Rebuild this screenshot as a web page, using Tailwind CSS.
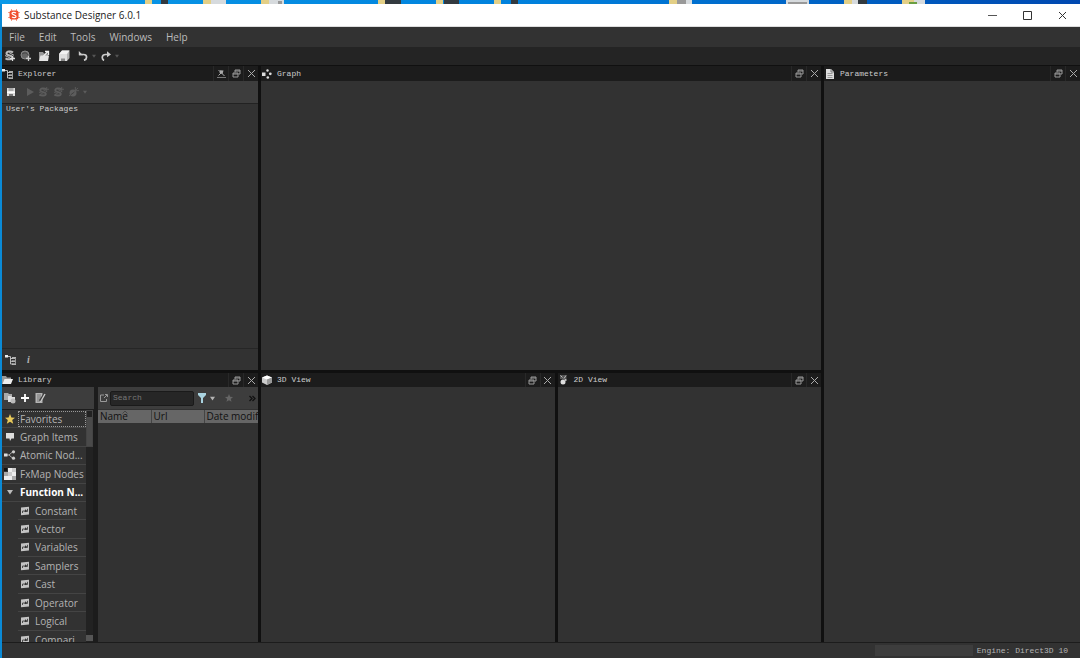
<!DOCTYPE html>
<html lang="en">
<head>
    <meta charset="UTF-8">
    <meta name="viewport" content="width=device-width, initial-scale=1.0">
    <title>Substance Designer 6.0.1</title>
    <script src="https://cdn.jsdelivr.net/npm/@tailwindcss/browser@4"></script>
</head>
<body class="h-screen flex flex-col overflow-hidden bg-[#0a8ad6] font-['Open_Sans',sans-serif] text-[10px] leading-4 text-[#b4b4b4]">

    <!-- shared icons -->
    <svg class="hidden">
        <symbol id="i-float" viewBox="0 0 9 9"><path d="M3 1h5v4H6.500M3 1v2.500M3 2h5" fill="none" stroke="#999"/><path d="M1 4h5v4H1zM1 5h5" fill="none" stroke="#999"/></symbol>
        <symbol id="i-close" viewBox="0 0 9 9"><path d="M1 1l7 7M8 1L1 8" fill="none" stroke="currentColor"/></symbol>
        <symbol id="i-tree" viewBox="0 0 12 10"><path d="M0 0h3v2.500H0z" fill="#eee"/><path d="M3 1.500h2.500v7.500h2M5.500 3.500h2M5.500 6.300h2" fill="none" stroke="#bbb"/><path d="M7 3h4M7 6.200h4M7 9.200h4" fill="none" stroke="#ddd" stroke-width="1.300"/><path d="M10.500 3v6" stroke="#999"/></symbol>
        <symbol id="i-s" viewBox="0 0 12 12"><path d="M9 2.500C7 .8 2.500 1.200 2.500 3.500 2.500 6 8.500 5 8.500 7.500 8.500 9.800 4 9.800 1.500 8.300" fill="none" stroke="currentColor" stroke-width="2"/><path d="M1 5.500l5 2.500M5 2.500l5 2.800" stroke="currentColor"/></symbol>
        <symbol id="i-func" viewBox="0 0 10 10"><path d="M1 1.500L9 .8v7.700l-8 .8z" fill="#c4c4c4"/><path d="M2.500 7V5h3M7.500 2.800v2.700H4.500" fill="none" stroke="#444" stroke-width=".9"/><path d="M5 3.200L7.200 4.800 5 6.300z" fill="#333"/></symbol>
        <symbol id="i-down" viewBox="0 0 6 6"><path d="M0 1h6L3 5.500z" fill="currentColor"/></symbol>
        <symbol id="i-star" viewBox="0 0 10 10"><path d="M5 0l1.400 3.500 3.600.2-2.800 2.400 1 3.700L5 7.800 1.800 9.800l1-3.700L0 3.700l3.600-.2z" fill="currentColor"/></symbol>
    </svg>

    <!-- desktop behind the window -->
    <svg class="w-full h-1 shrink-0" viewBox="0 0 1080 4" preserveAspectRatio="none">
        <defs><linearGradient id="desk"><stop offset="0" stop-color="#0a9ae8"/><stop offset=".5" stop-color="#0080dc"/><stop offset="1" stop-color="#0048b0"/></linearGradient></defs>
        <path fill="url(#desk)" d="M0 0h1080v4H0z"/>
        <path fill="#e3cf86" d="M145 0h7v4h-7zM203 0h8v4h-8zM261 0h8v4h-8zM378 0h7v4h-7zM436 0h7v4h-7zM494 0h7v4h-7zM669 0h8v4h-8zM844 0h8v4h-8zM902 0h12v4h-12z"/>
        <path fill="#d6dadd" d="M211 0h15v4h-15zM269 0h15v4h-15zM686 0h6v4h-6zM786 0h23v4h-23zM852 0h6v4h-6zM914 0h11v4h-11z"/>
        <path fill="#333a40" d="M161 0h7v4h-7zM385 0h16v4h-16zM444 0h15v4h-15zM511 0h7v4h-7zM858 0h9v4h-9z"/>
        <path fill="#999" d="M278 1h4v3h-4zM677 0h9v4h-9zM788 2h19v2h-19z"/>
        <path fill="#6a9f42" d="M909 2h8v2h-8z"/>
    </svg>

    <div class="flex-1 min-h-0 ml-0.5 flex flex-col bg-[#323232]">
        <header class="h-[23px] shrink-0 flex items-center bg-white text-[#222] pl-1.5 border-b border-[#ddd]">
            <svg class="w-3 h-3 mr-1" viewBox="0 0 12 12"><path d="M3.500 0v12M8.500 0v12M0 3.500h12M0 8.500h12" stroke="#f3a08a"/><rect x="1.500" y="1.500" width="9" height="9" rx="2" fill="#f0502f"/><path d="M8 4C6.500 3 4 3.200 4 4.600c0 1.500 4 1.200 4 2.800S5.500 9 4 8" fill="none" stroke="#fff" stroke-width="1.200"/></svg>
            <h1>Substance Designer 6.0.1</h1>
            <div class="ml-auto flex">
                <button class="w-[35px] h-5 flex items-center justify-center" aria-label="Minimize"><svg class="w-[9px] h-[9px]" viewBox="0 0 9 9"><path d="M0 4.500h9" stroke="#555"/></svg></button>
                <button class="w-[35px] h-5 flex items-center justify-center" aria-label="Maximize"><svg class="w-[9px] h-[9px]" viewBox="0 0 9 9"><path d="M.5 .5h8v8h-8z" fill="none" stroke="#333"/></svg></button>
                <button class="w-[35px] h-5 flex items-center justify-center" aria-label="Close"><svg class="w-[9px] h-[9px] text-[#333]"><use href="#i-close"/></svg></button>
            </div>
        </header>

        <nav class="h-5 shrink-0 flex items-center gap-3.5 pl-[7px] text-[#bcbcbc]">
            <button>File</button>
            <button>Edit</button>
            <button>Tools</button>
            <button>Windows</button>
            <button>Help</button>
        </nav>

        <!-- main toolbar -->
        <div class="h-[18px] shrink-0 flex items-center pl-0.5 bg-[#242424] text-[#bbb]">
            <button class="w-4" aria-label="New substance"><svg class="w-3 h-3" viewBox="0 0 12 12"><use href="#i-s"/><path d="M8.500 6v5M6 8.500h5" stroke="#ddd" stroke-width="1.300"/></svg></button>
            <button class="w-[18px]" aria-label="New package"><svg class="w-3 h-3" viewBox="0 0 12 12"><circle cx="5" cy="5" r="4" fill="#666" stroke="#8a8a8a"/><path d="M2 4c3-2 5-1 6 1" stroke="#444" fill="none"/><path d="M8.500 6v5M6 8.500h5" stroke="#ccc" stroke-width="1.300"/></svg></button>
            <button class="w-5" aria-label="Open"><svg class="w-3 h-3" viewBox="0 0 12 12"><path d="M1 2h4l1 1.500h4V11H1z" fill="#999"/><path d="M2.500 5.500H11L10 11H1z" fill="#e4e4e4"/><path d="M5.500 6l4-4M7 1.500h3.500V5" fill="none" stroke="#eee" stroke-width="1.300"/></svg></button>
            <button class="w-5" aria-label="Save all"><svg class="w-3 h-3" viewBox="0 0 12 12"><path d="M4 .5h7.500V8L9 11H1V4z" fill="#b4b4b4"/><path d="M1 4h8v7H1z" fill="#dedede"/><path d="M1 4l3-3.500h7.500L9 4z" fill="#f2f2f2"/><path d="M3 8.500h4V11H3z" fill="#888"/></svg></button>
            <button class="w-3.5" aria-label="Undo"><svg class="w-2.5 h-2.5" viewBox="0 0 10 10"><path d="M1 3.500h4.500C9.500 3.500 9.500 8 6 9.300" fill="none" stroke="#ccc" stroke-width="1.700"/><path d="M.8 0v4.300H5z" fill="#ccc"/></svg></button>
            <button class="w-[9px]" aria-label="Undo history"><svg class="w-1 h-1 text-[#555]"><use href="#i-down"/></svg></button>
            <button class="w-3.5" aria-label="Redo"><svg class="w-2.5 h-2.5" viewBox="0 0 10 10"><path d="M8 3.500H4.500C.5 3.500.5 8 3 9.500" fill="none" stroke="#ccc" stroke-width="1.700"/><path d="M10 3.500L6 .3v6z" fill="#ccc"/></svg></button>
            <button aria-label="Redo history"><svg class="w-1 h-1 text-[#555]"><use href="#i-down"/></svg></button>
        </div>

        <!-- docks -->
        <main class="flex-1 min-h-0 flex gap-[3px] pt-px bg-[#101010]">
            <div class="w-64 shrink-0 flex flex-col gap-[3px]">
                <section class="flex-[304] min-h-0 flex flex-col bg-[#323232]">
                    <div class="h-[15px] shrink-0 flex items-center bg-[#1c1c1c] font-['Liberation_Mono',monospace] text-[8px] text-[#ccc]">
                        <svg class="w-3 h-2.5 mr-1"><use href="#i-tree"/></svg>
                        <h2 class="flex-1">Explorer</h2>
                        <button class="w-[15px] h-full flex items-center justify-center border-l border-[#282828]" aria-label="Pin"><svg class="w-[9px] h-[9px]" viewBox="0 0 9 9"><path d="M0 8.500h9" stroke="#777"/><path d="M1.500 1l6 6" stroke="#aaa"/><path d="M3 1.200l3.500.3L5.500 5 2.500 4z" fill="#aaa"/><path d="M1.500 6.500L4 4" stroke="#aaa"/></svg></button>
                        <button class="w-[15px] h-full flex items-center justify-center border-l border-[#282828]" aria-label="Float"><svg class="w-[9px] h-[9px]"><use href="#i-float"/></svg></button>
                        <button class="w-[15px] h-full flex items-center justify-center border-l border-[#282828] text-[#aaa]" aria-label="Close"><svg class="w-[9px] h-[9px]"><use href="#i-close"/></svg></button>
                    </div>
                    <div class="h-[23px] shrink-0 flex items-center gap-1 pl-1 bg-[#3d3d3d] border-b border-[#222] text-[#5c5c5c]">
                        <button class="mr-1.5" aria-label="Save"><svg class="w-2.5 h-2.5" viewBox="0 0 10 10"><path d="M1 1h8v8H1z" fill="#ddd"/><path d="M2.500 1h5v3h-5z" fill="#aaa"/><path d="M1 4.500h8v1.500H1z" fill="#fff"/><path d="M3 7h4v2H3z" fill="#777"/></svg></button>
                        <button aria-label="Play"><svg class="w-2 h-2" viewBox="0 0 8 8"><path d="M1 0l7 4-7 4z" fill="currentColor"/></svg></button>
                        <button aria-label="Publish"><svg class="w-[11px] h-[11px]" viewBox="0 0 12 12"><use href="#i-s"/><path d="M9.500 0v5M7 2.500h5" stroke="currentColor"/></svg></button>
                        <button aria-label="Export"><svg class="w-[11px] h-[11px]" viewBox="0 0 12 12"><use href="#i-s"/><path d="M9.500 0v5M7 2.500h5" stroke="currentColor"/></svg></button>
                        <button aria-label="Settings"><svg class="w-[11px] h-[11px]" viewBox="0 0 12 12"><circle cx="5.500" cy="6.500" r="3.800" fill="currentColor"/><path d="M1 10L11 1M8 0v4h4" fill="none" stroke="currentColor"/><path d="M3 8.500l4-3" stroke="#3d3d3d"/></svg></button>
                        <button aria-label="More"><svg class="w-1 h-1"><use href="#i-down"/></svg></button>
                    </div>
                    <p class="flex-1 pl-1 leading-[10px] font-['Liberation_Mono',monospace] text-[8px] text-[#ccc]">User's Packages</p>
                    <div class="h-[22px] shrink-0 flex items-center gap-2.5 pl-[3px] border-t border-[#262626]">
                        <button aria-label="Tree"><svg class="w-3 h-2.5"><use href="#i-tree"/></svg></button>
                        <button class="font-['Liberation_Serif',serif] italic font-bold">i</button>
                    </div>
                </section>

                <section class="flex-[269] min-h-0 flex flex-col bg-[#323232]">
                    <div class="h-3.5 shrink-0 flex items-center bg-[#1c1c1c] font-['Liberation_Mono',monospace] text-[8px] text-[#ccc]">
                        <svg class="w-3 h-2.5 mr-1" viewBox="0 0 12 10"><path d="M0 1h4l1 1.500h4V9H0z" fill="#999"/><path d="M2.500 4H11L9 9H.5z" fill="#eee"/></svg>
                        <h2 class="flex-1">Library</h2>
                        <button class="w-[15px] h-full flex items-center justify-center border-l border-[#282828]" aria-label="Float"><svg class="w-[9px] h-[9px]"><use href="#i-float"/></svg></button>
                        <button class="w-[15px] h-full flex items-center justify-center border-l border-[#282828] text-[#aaa]" aria-label="Close"><svg class="w-[9px] h-[9px]"><use href="#i-close"/></svg></button>
                    </div>
                    <div class="flex-1 min-h-0 flex gap-1 bg-[#1c1c1c]">
                        <div class="w-[92px] shrink-0 flex flex-col">
                            <div class="h-[22px] shrink-0 flex items-center gap-1 pl-0.5 bg-[#3d3d3d]">
                                <button aria-label="New folder"><svg class="w-3 h-3" viewBox="0 0 12 12"><path d="M0 1h4l1 1h3v6H0z" fill="#aaa"/><path d="M4 4h3l1 1h3v5H4z" fill="#ddd"/><circle cx="9" cy="9" r="2.500" fill="#bbb"/></svg></button>
                                <button aria-label="Add"><svg class="w-2.5 h-2.5" viewBox="0 0 10 10"><path d="M5 1v8M1 5h8" stroke="#fff" stroke-width="1.800"/></svg></button>
                                <button aria-label="Edit filter"><svg class="w-3 h-3" viewBox="0 0 12 12"><path d="M1.500 1h7v10h-7z" fill="#b4b4b4"/><path d="M3 3h4M3 5h4M3 7h3M3 9h3" stroke="#777"/><path d="M6 9l5-7.500" stroke="#3d3d3d" stroke-width="2.500"/><path d="M6.500 10l4.500-8" stroke="#ccc" stroke-width="1.400"/></svg></button>
                            </div>
                            <div class="flex-1 min-h-0 flex mt-px overflow-hidden">
                                <ul class="w-[84px] h-[239px] grid auto-rows-fr bg-[#323232]">
                                    <li class="flex items-center border-b border-[#444]"><svg class="w-2.5 h-2.5 mx-[3px] text-[#e8c95a]"><use href="#i-star"/></svg><a href="#" class="flex-1 pl-px leading-[14px] border border-dotted border-[#999]">Favorites</a></li>
                                    <li class="flex items-center border-b border-[#444]"><svg class="w-2.5 h-2.5 mx-[3px]" viewBox="0 0 10 10"><path d="M1 1h8v5.500H6.500L5 9 4.500 6.500H1z" fill="#ddd"/></svg><a href="#" class="pl-0.5">Graph Items</a></li>
                                    <li class="flex items-center border-b border-[#444]"><svg class="w-3 h-2.5 mx-0.5" viewBox="0 0 12 10"><path d="M2 5h3l4-3.500M5 5l4 3.500" fill="none" stroke="#aaa"/><path d="M0 3.500h3.500v3H0z" fill="#ddd"/><circle cx="9.500" cy="1.800" r="1.600" fill="#ccc"/><circle cx="9.500" cy="8.200" r="1.600" fill="#ccc"/></svg><a href="#" class="pl-0.5">Atomic Nod...</a></li>
                                    <li class="flex items-center border-b border-[#444]"><svg class="w-3 h-3 mx-0.5" viewBox="0 0 12 12"><path d="M4 0h8v12H0V4h4z" fill="#aaa"/><path d="M4 0h4v4H4zM8 4h4v4H8zM0 8h8v4H0z" fill="#eee"/><path d="M8 0h4v4H8zM4 4h4v4H4z" fill="#ccc"/><path d="M0 0h3v3H0z" fill="#111"/></svg><a href="#" class="pl-0.5 whitespace-nowrap">FxMap Nodes</a></li>
                                    <li class="flex items-center border-b border-[#444] font-bold text-white"><svg class="w-1.5 h-1.5 mx-[5px] text-[#bbb]"><use href="#i-down"/></svg><a href="#" class="pl-0.5">Function N...</a></li>
                                    <li class="ml-4 pl-0.5 gap-[5px] flex items-center border-b border-[#444]"><svg class="w-2.5 h-2.5"><use href="#i-func"/></svg><a href="#">Constant</a></li>
                                    <li class="ml-4 pl-0.5 gap-[5px] flex items-center border-b border-[#444]"><svg class="w-2.5 h-2.5"><use href="#i-func"/></svg><a href="#">Vector</a></li>
                                    <li class="ml-4 pl-0.5 gap-[5px] flex items-center border-b border-[#444]"><svg class="w-2.5 h-2.5"><use href="#i-func"/></svg><a href="#">Variables</a></li>
                                    <li class="ml-4 pl-0.5 gap-[5px] flex items-center border-b border-[#444]"><svg class="w-2.5 h-2.5"><use href="#i-func"/></svg><a href="#">Samplers</a></li>
                                    <li class="ml-4 pl-0.5 gap-[5px] flex items-center border-b border-[#444]"><svg class="w-2.5 h-2.5"><use href="#i-func"/></svg><a href="#">Cast</a></li>
                                    <li class="ml-4 pl-0.5 gap-[5px] flex items-center border-b border-[#444]"><svg class="w-2.5 h-2.5"><use href="#i-func"/></svg><a href="#">Operator</a></li>
                                    <li class="ml-4 pl-0.5 gap-[5px] flex items-center border-b border-[#444]"><svg class="w-2.5 h-2.5"><use href="#i-func"/></svg><a href="#">Logical</a></li>
                                    <li class="ml-4 pl-0.5 gap-[5px] flex items-center"><svg class="w-2.5 h-2.5"><use href="#i-func"/></svg><a href="#">Compari</a></li>
                                </ul>
                                <!-- scrollbar -->
                                <div class="w-[7px] flex flex-col justify-between bg-[#222]">
                                    <div class="h-[37px] border border-[#444] flex flex-col justify-end"><div class="h-[29px] bg-[#4a4a4a]"></div></div>
                                    <div class="h-1.5 mb-px bg-[#555]"></div>
                                </div>
                            </div>
                        </div>
                        <div class="flex-1 min-w-0 flex flex-col bg-[#323232]">
                            <div class="h-[22px] shrink-0 flex items-center pl-0.5 bg-[#3d3d3d]">
                                <svg class="w-2 h-2 mr-0.5" viewBox="0 0 8 8"><path d="M4 1H.5v6.500h6V5M4 4l3-3M5 .5h2.500V3" fill="none" stroke="#999"/></svg>
                                <input type="text" placeholder="Search" aria-label="Search" class="w-[84px] h-[15px] px-0.5 rounded-xs border border-[#1a1a1a] bg-[#262626] font-['Liberation_Mono',monospace] text-[8px] placeholder:text-[#777]">
                                <button class="ml-1 flex items-center gap-1" aria-label="Filter"><svg class="w-2 h-2.5" viewBox="0 0 8 10"><path d="M0 0h8v2L5 5v5H3V5L0 2z" fill="#a9d3e0"/></svg><svg class="w-[5px] h-[5px]"><use href="#i-down"/></svg></button>
                                <button class="ml-2.5 text-[#666]" aria-label="Favorite"><svg class="w-2 h-2"><use href="#i-star"/></svg></button>
                                <button class="ml-auto mr-0.5" aria-label="More"><svg class="w-[7px] h-[7px]" viewBox="0 0 7 7"><path d="M.5 1L3 3.500.5 6M3.500 1L6 3.500 3.500 6" fill="none" stroke="#111" stroke-width="1.300"/></svg></button>
                            </div>
                            <table class="w-full mt-px table-fixed text-left leading-[13px] bg-[#666] text-[#111]">
                                <tr>
                                    <th class="w-[53px] pl-0.5 font-normal border-r border-[#444] relative">Name<svg class="absolute top-0 left-6 w-1.5 h-1" viewBox="0 0 6 4"><path d="M.5 3.500L3 1l2.500 2.500" fill="none" stroke="#444"/></svg></th>
                                    <th class="w-[53px] pl-0.5 font-normal border-r border-[#444]">Url</th>
                                    <th class="pl-0.5 font-normal overflow-hidden whitespace-nowrap">Date modifi</th>
                                </tr>
                            </table>
                        </div>
                    </div>
                </section>
            </div>

            <div class="flex-1 min-w-0 flex flex-col gap-[3px]">
                <section class="flex-[304] min-h-0 flex flex-col bg-[#323232]">
                    <div class="h-[15px] shrink-0 flex items-center bg-[#1c1c1c] font-['Liberation_Mono',monospace] text-[8px] text-[#ccc]">
                        <svg class="w-2.5 h-2.5 ml-px mr-[5px]" viewBox="0 0 10 10"><path d="M0 3.500h3.500v3.500H0z" fill="#ddd"/><circle cx="5.500" cy="1.500" r="1.200" fill="#ddd"/><circle cx="8.300" cy="4.800" r="1.400" fill="#ddd"/><circle cx="5.800" cy="8.500" r="1.300" fill="#ddd"/></svg>
                        <h2 class="flex-1">Graph</h2>
                        <button class="w-[15px] h-full flex items-center justify-center border-l border-[#282828]" aria-label="Float"><svg class="w-[9px] h-[9px]"><use href="#i-float"/></svg></button>
                        <button class="w-[15px] h-full flex items-center justify-center border-l border-[#282828] text-[#aaa]" aria-label="Close"><svg class="w-[9px] h-[9px]"><use href="#i-close"/></svg></button>
                    </div>
                </section>
                <div class="flex-[269] min-h-0 flex gap-[3px]">
                    <section class="flex-[293] bg-[#323232]">
                        <div class="h-3.5 flex items-center bg-[#1c1c1c] font-['Liberation_Mono',monospace] text-[8px] text-[#ccc]">
                            <svg class="w-2.5 h-2.5 ml-px mr-[5px]" viewBox="0 0 10 10"><path d="M0 2.500L5 .5l5 2v5L5 10 0 7.500z" fill="#ccc"/><path d="M0 2.500L5 .5l5 2-5 2z" fill="#fff"/><path d="M5 4.500l5-2v5L5 10z" fill="#999"/></svg>
                            <h2 class="flex-1">3D View</h2>
                            <button class="w-[15px] h-full flex items-center justify-center border-l border-[#282828]" aria-label="Float"><svg class="w-[9px] h-[9px]"><use href="#i-float"/></svg></button>
                            <button class="w-[15px] h-full flex items-center justify-center border-l border-[#282828] text-[#aaa]" aria-label="Close"><svg class="w-[9px] h-[9px]"><use href="#i-close"/></svg></button>
                        </div>
                    </section>
                    <section class="flex-[263] bg-[#323232]">
                        <div class="h-3.5 flex items-center bg-[#1c1c1c] font-['Liberation_Mono',monospace] text-[8px] text-[#ccc]">
                            <svg class="w-2.5 h-2.5 ml-px mr-[5px]" viewBox="0 0 10 10"><path d="M1 0h6.500v4H1z" fill="#555"/><path d="M1.500 .5l2 2M7 .5l-2 3" stroke="#bbb"/><circle cx="4" cy="7" r="2.500" fill="#ddd"/><path d="M5.500 4h2v2h-2z" fill="#bbb"/></svg>
                            <h2 class="flex-1">2D View</h2>
                            <button class="w-[15px] h-full flex items-center justify-center border-l border-[#282828]" aria-label="Float"><svg class="w-[9px] h-[9px]"><use href="#i-float"/></svg></button>
                            <button class="w-[15px] h-full flex items-center justify-center border-l border-[#282828] text-[#aaa]" aria-label="Close"><svg class="w-[9px] h-[9px]"><use href="#i-close"/></svg></button>
                        </div>
                    </section>
                </div>
            </div>

            <section class="w-64 shrink-0 bg-[#323232]">
                <div class="h-[15px] flex items-center bg-[#1c1c1c] font-['Liberation_Mono',monospace] text-[8px] text-[#ccc]">
                    <svg class="w-2.5 h-2.5 ml-px mr-[5px]" viewBox="0 0 10 10"><path d="M1 0h5l3 3v7H1z" fill="#ddd"/><path d="M6 0v3h3" fill="none" stroke="#777"/><path d="M2.500 4.500h5M2.500 6.500h5M2.500 8.500h5" stroke="#999"/></svg>
                    <h2 class="flex-1">Parameters</h2>
                    <button class="w-[15px] h-full flex items-center justify-center border-l border-[#282828]" aria-label="Float"><svg class="w-[9px] h-[9px]"><use href="#i-float"/></svg></button>
                    <button class="w-[15px] h-full flex items-center justify-center border-l border-[#282828] text-[#aaa]" aria-label="Close"><svg class="w-[9px] h-[9px]"><use href="#i-close"/></svg></button>
                </div>
            </section>
        </main>

        <footer class="h-4 shrink-0 flex items-center justify-end gap-1 pr-3 border-t border-[#1c1c1c] font-['Liberation_Mono',monospace] text-[8px]">
            <div class="w-[98px] h-[11px] bg-[#3d3d3d]"></div>
            <span>Engine: Direct3D 10</span>
        </footer>
    </div>
</body>
</html>
